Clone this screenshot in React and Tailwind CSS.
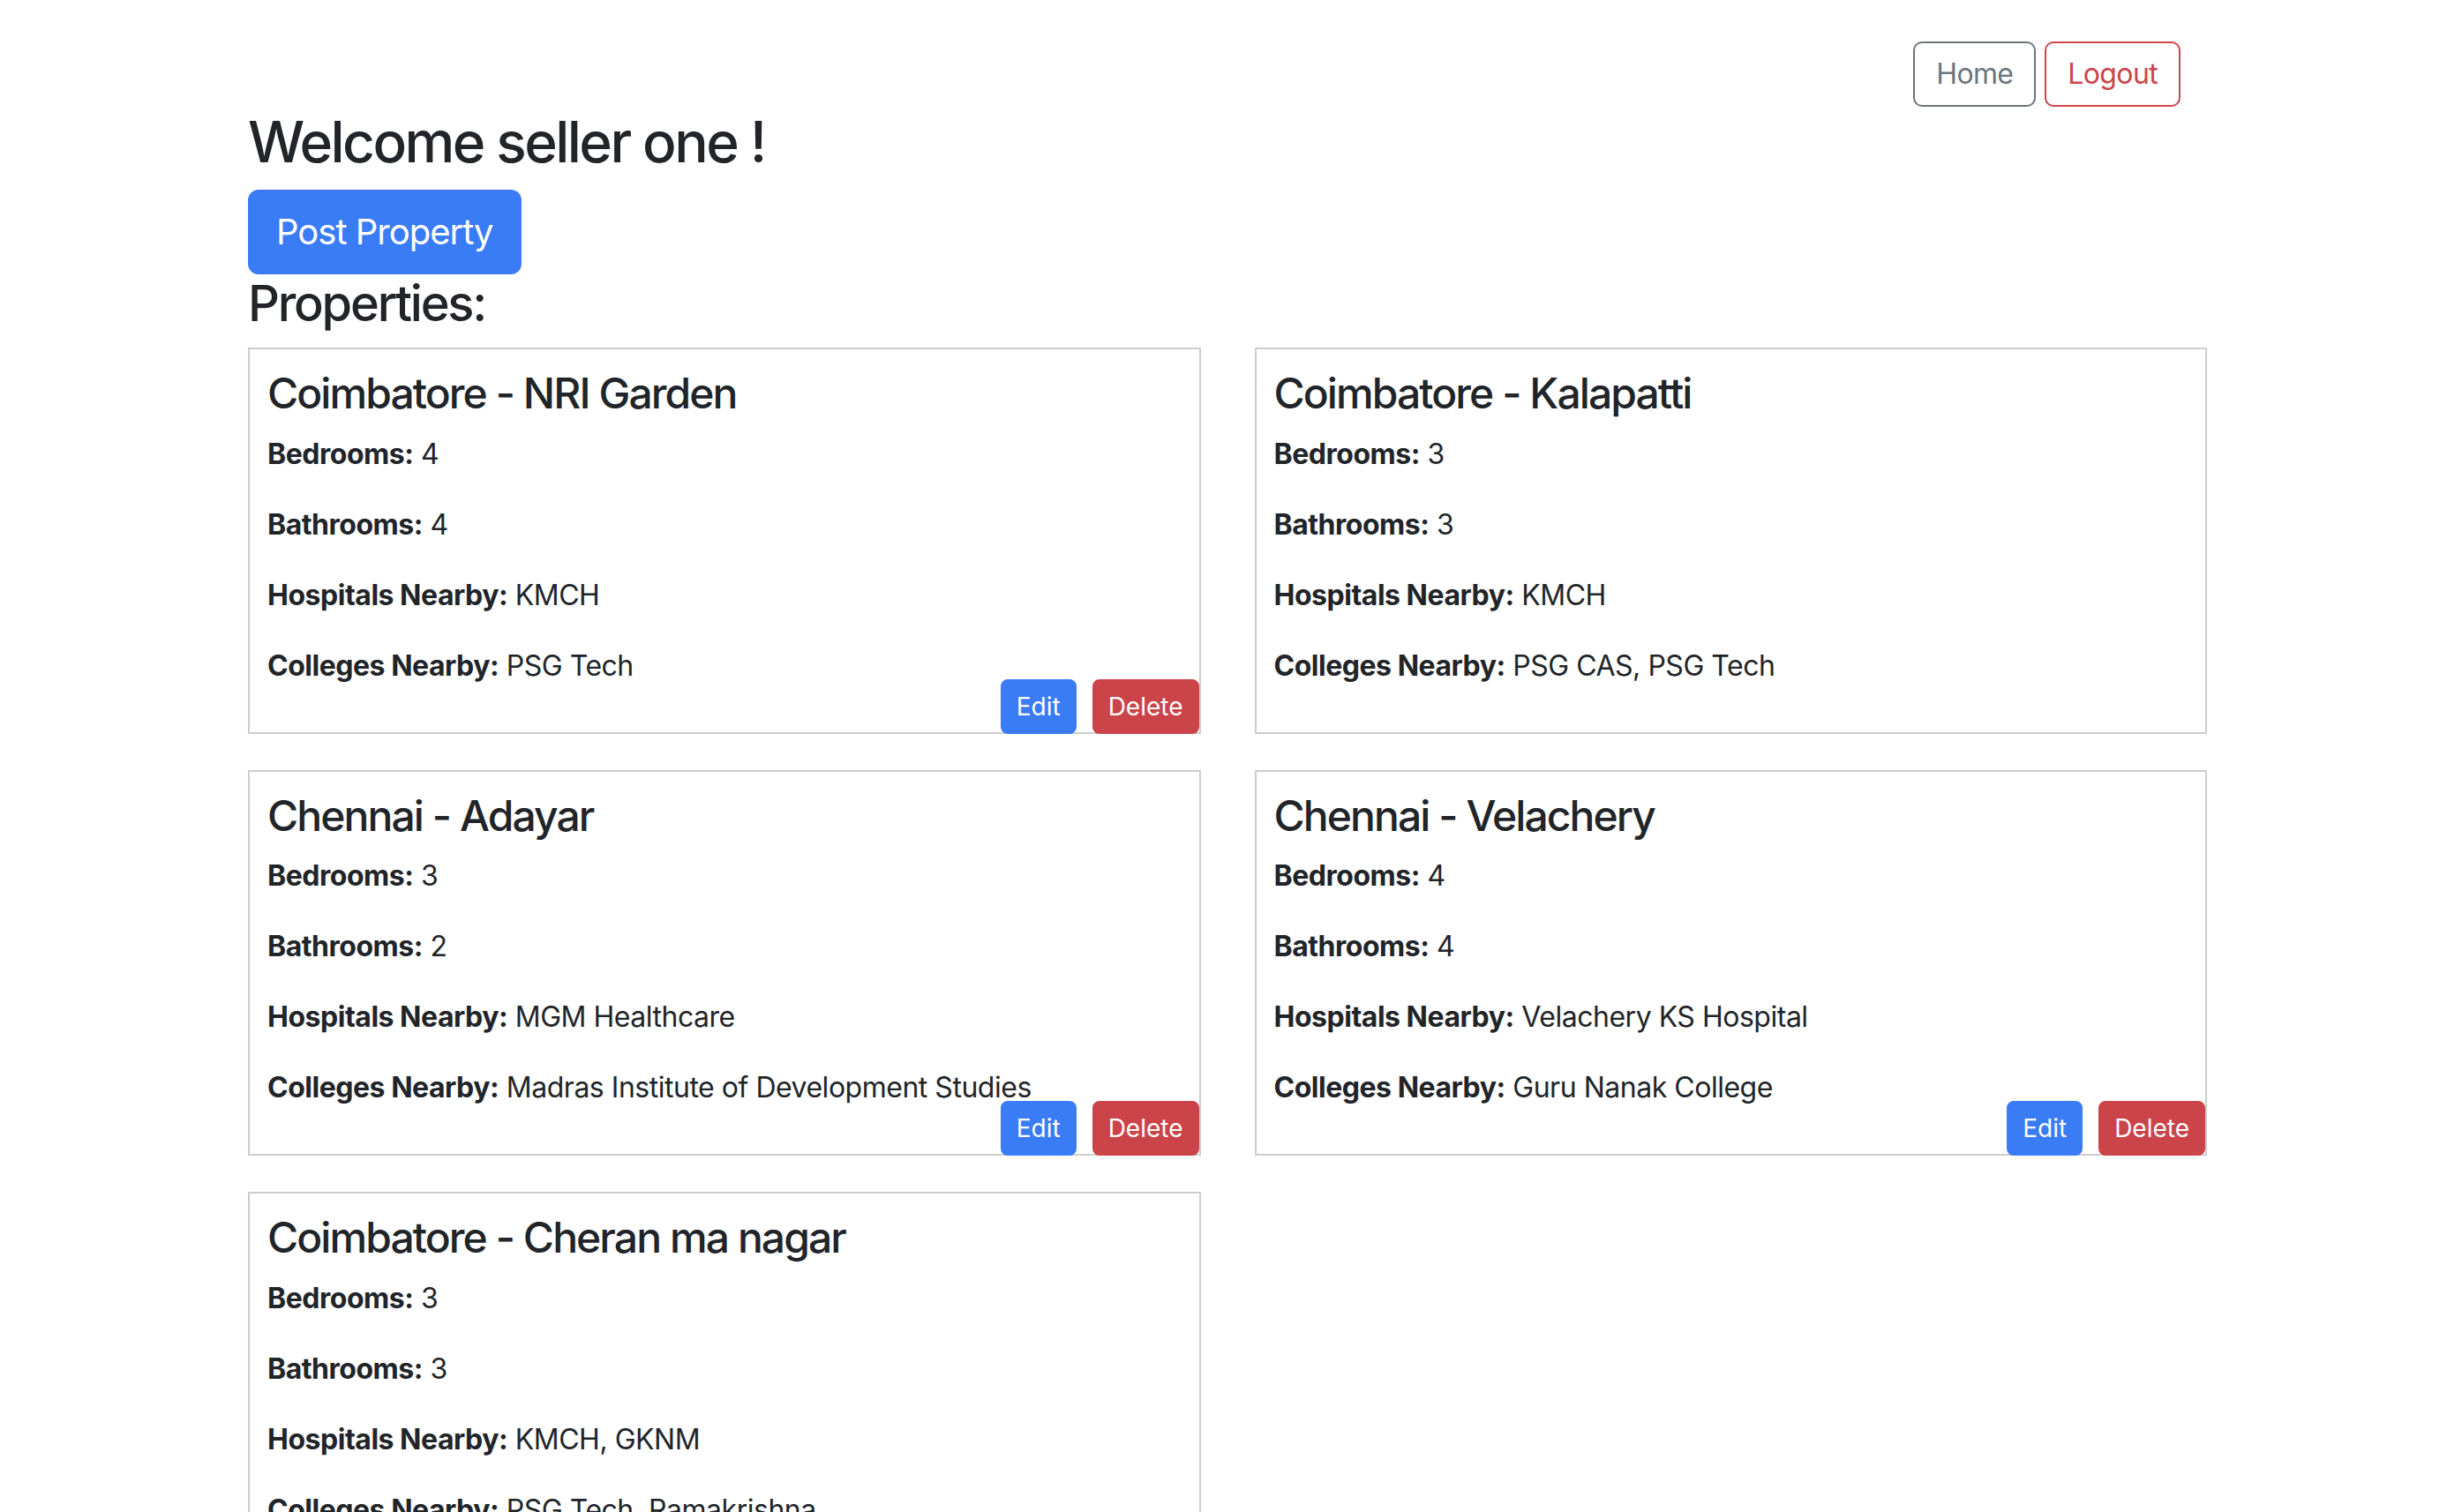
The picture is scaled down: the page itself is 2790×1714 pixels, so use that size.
import React from 'react';

const properties = [
    { id: 1, title: 'Coimbatore - NRI Garden', bedrooms: 4, bathrooms: 4, hospitals: 'KMCH', colleges: 'PSG Tech', own: true },
    { id: 2, title: 'Coimbatore - Kalapatti', bedrooms: 3, bathrooms: 3, hospitals: 'KMCH', colleges: 'PSG CAS, PSG Tech', own: false },
    { id: 3, title: 'Chennai - Adayar', bedrooms: 3, bathrooms: 2, hospitals: 'MGM Healthcare', colleges: 'Madras Institute of Development Studies', own: true },
    { id: 4, title: 'Chennai - Velachery', bedrooms: 4, bathrooms: 4, hospitals: 'Velachery KS Hospital', colleges: 'Guru Nanak College', own: true },
    { id: 5, title: 'Coimbatore - Cheran ma nagar', bedrooms: 3, bathrooms: 3, hospitals: 'KMCH, GKNM', colleges: 'PSG Tech, Ramakrishna', own: false },
];

const Field = ({ label, value }) => (
    <p className="text-[32px] leading-[48px] mb-[32px] tracking-[-0.015em]">
        <strong className="font-bold">{label}:</strong> {value}
    </p>
);

const PropertyCard = ({ title, bedrooms, bathrooms, hospitals, colleges, own }) => (
    <div className="relative border-2 border-[#cdcdcd] px-[20px] pt-[21px] pb-[19px]">
        <h4 className="text-[48px] leading-[57.6px] font-medium mb-[16px] tracking-[-0.04em]">{title}</h4>
        <Field label="Bedrooms" value={bedrooms} />
        <Field label="Bathrooms" value={bathrooms} />
        <Field label="Hospitals Nearby" value={hospitals} />
        <Field label="Colleges Nearby" value={colleges} />
        {own && (
            // edit/delete sit over the bottom-right corner of the card
            <div className="absolute right-0 bottom-[-2px] flex gap-[18px]">
                <button className="h-[62px] px-[16px] rounded-[8px] border-2 border-[#3a7bf6] bg-[#3a7bf6] text-white text-[28px] leading-[42px]">
                    Edit
                </button>
                <button className="h-[62px] px-[16px] rounded-[8px] border-2 border-[#cb444a] bg-[#cb444a] text-white text-[28px] leading-[42px]">
                    Delete
                </button>
            </div>
        )}
    </div>
);

export default function App() {
    return (
        <div className="min-h-screen bg-white text-[#212529] font-['Inter','Liberation_Sans',sans-serif]">
            {/* Top nav */}
            <div className="h-[122px] flex justify-end items-start gap-[10px] pt-[47px] pr-[319px]">
                <button className="h-[74px] px-[24px] rounded-[10px] border-2 border-[#6c757d] text-[#6c757d] text-[32px] leading-[48px] tracking-[-0.02em]">
                    Home
                </button>
                <button className="h-[74px] px-[24px] rounded-[10px] border-2 border-[#cb444a] text-[#cb444a] text-[32px] leading-[48px] tracking-[-0.02em]">
                    Logout
                </button>
            </div>

            <div className="ml-[281px] w-[2220px]">
                <h2 className="text-[64px] leading-[77px] font-medium mb-[16px] tracking-[-0.04em]">Welcome seller one !</h2>
                <button className="h-[96px] px-[32px] rounded-[12px] bg-[#3a7bf6] text-white text-[40px] leading-[60px] tracking-[-0.025em]">
                    Post Property
                </button>
                <h3 className="text-[56px] leading-[67px] font-medium mb-[16px] tracking-[-0.04em]">Properties:</h3>

                <div className="grid grid-cols-2 gap-x-[61px] gap-y-[41px]">
                    {properties.map(p => (
                        <PropertyCard key={p.id} {...p} />
                    ))}
                </div>
            </div>
        </div>
    );
}
